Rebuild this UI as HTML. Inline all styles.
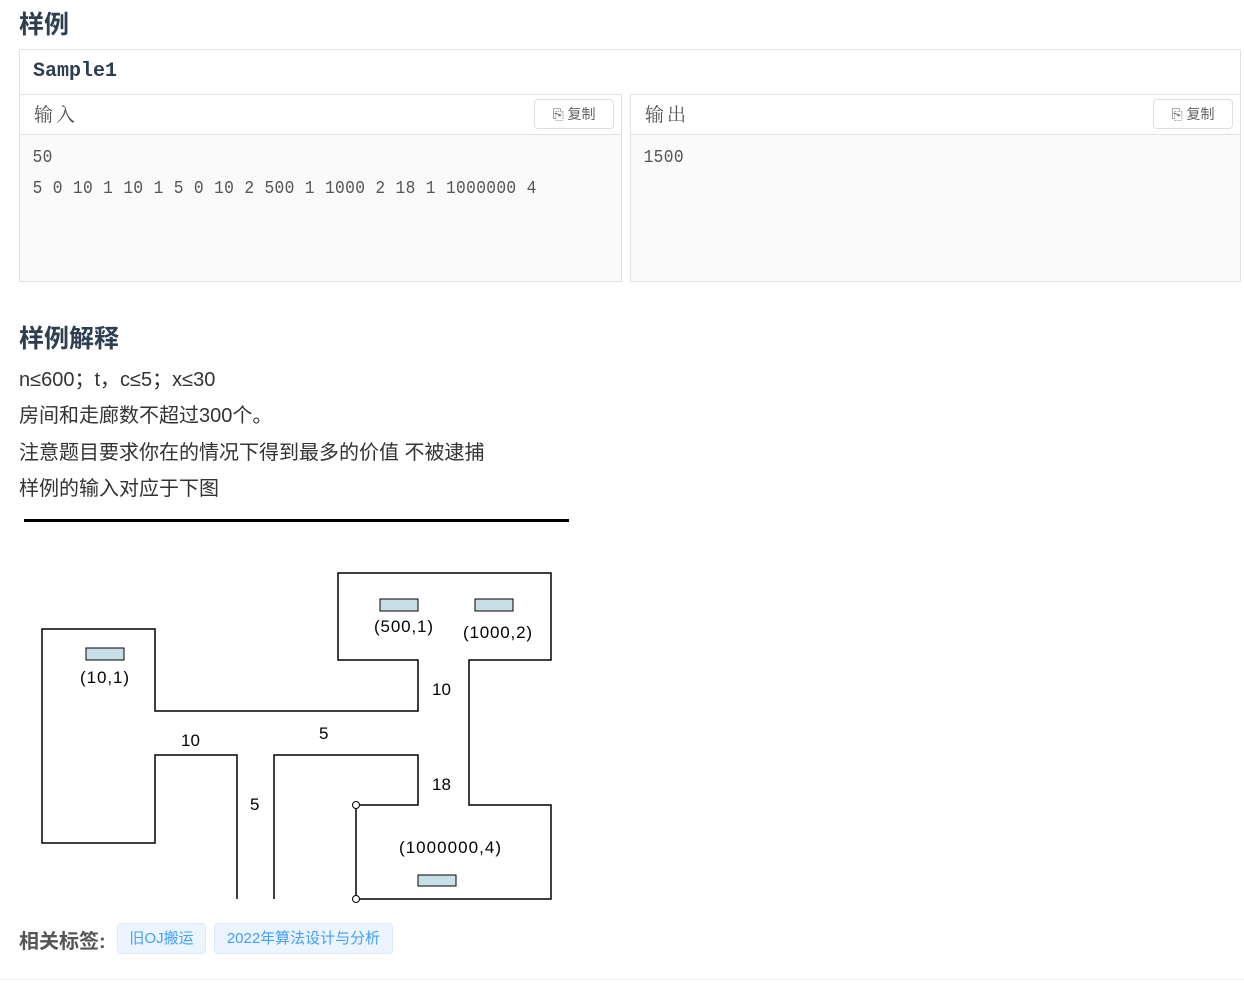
<!DOCTYPE html>
<html><head><meta charset="utf-8"><style>
*{margin:0;padding:0;box-sizing:border-box}
body{width:1244px;height:991px;background:#fff;font-family:"Liberation Sans","Noto Sans CJK SC",sans-serif;position:relative;overflow:hidden;color:#333}
.abs{position:absolute}
h2{position:absolute;font-size:25px;font-weight:bold;color:#2c3e50;font-family:"Liberation Sans","Noto Sans CJK SC",sans-serif}
.box{position:absolute;left:19px;top:49px;width:1222px;height:46px;border:1px solid #e2e2e2;border-bottom:none}
.panel{position:absolute;top:94px;height:188px;border:1px solid #e2e2e2;background:#fafafa}
.ph{height:40px;background:#fff;border-bottom:1px solid #e2e2e2;position:relative}
.ph span{position:absolute;left:14px;top:5px;font-size:19px;color:#555;font-family:"Liberation Serif","Noto Serif CJK SC",serif;letter-spacing:3px}
.btn{position:absolute;right:7px;top:4px;width:80px;height:30px;border:1px solid #dcdfe6;border-radius:4px;font-size:14px;color:#606266;text-align:center;line-height:28px}
.code{font-family:"Liberation Mono",monospace;font-size:18px;color:#555;padding:8px 14px;line-height:31px;white-space:pre;letter-spacing:0.4px;transform:scaleX(0.9);transform-origin:left}
.t{position:absolute;left:19px;font-size:20px;color:#333}
.tag{position:absolute;top:923px;height:31px;background:#ecf5ff;border:1px solid #d9ecff;border-radius:4px;color:#409eff;font-size:15px;line-height:29px;text-align:center}
</style></head><body>
<h2 style="left:19px;top:5px">样例</h2>
<div class="box"><div style="position:absolute;left:13px;top:10px;font-family:'Liberation Mono',monospace;font-weight:bold;font-size:20px;color:#2c3e50">Sample1</div></div>
<div class="panel" style="left:19px;width:603px">
 <div class="ph"><span>输入</span><div class="btn">⎘ 复制</div></div>
 <div class="code">50
5 0 10 1 10 1 5 0 10 2 500 1 1000 2 18 1 1000000 4</div>
</div>
<div class="panel" style="left:630px;width:611px">
 <div class="ph"><span>输出</span><div class="btn">⎘ 复制</div></div>
 <div class="code">1500</div>
</div>
<h2 style="left:19px;top:319px">样例解释</h2>
<div class="t" style="top:363px">n≤600；t，c≤5；x≤30</div>
<div class="t" style="top:399px">房间和走廊数不超过300个。</div>
<div class="t" style="top:436px">注意题目要求你在的情况下得到最多的价值 不被逮捕</div>
<div class="t" style="top:472px">样例的输入对应于下图</div>
<svg class="abs" style="left:0;top:0" width="1244" height="991">
<line x1="24" y1="520.5" x2="569" y2="520.5" stroke="#000" stroke-width="3"/>
<g fill="none" stroke="#000" stroke-width="1.5">
<polyline points="237,899 237,755 155,755 155,843 42,843 42,629 155,629 155,711 418,711 418,660 338,660 338,573 551,573 551,660 469,660 469,805 551,805 551,899 356,899 356,805 418,805 418,755 274,755 274,899"/>
</g>
<circle cx="356" cy="805" r="3.5" fill="#fff" stroke="#000"/>
<circle cx="356" cy="899" r="3.5" fill="#fff" stroke="#000"/>
<g fill="#c7e0e5" stroke="#000" stroke-width="1">
<rect x="86" y="648" width="38" height="12"/><rect x="380" y="599" width="38" height="12"/><rect x="475" y="599" width="38" height="12"/><rect x="418" y="875" width="38" height="11"/>
</g>
<g font-family="Liberation Sans,sans-serif" font-size="17" fill="#000">
<text x="80" y="683" textLength="49">(10,1)</text><text x="374" y="632" textLength="59">(500,1)</text><text x="463" y="638" textLength="69">(1000,2)</text>
<text x="432" y="695">10</text><text x="181" y="746">10</text><text x="319" y="739">5</text><text x="250" y="810">5</text><text x="432" y="790">18</text><text x="399" y="853" textLength="102">(1000000,4)</text>
</g>
<line x1="0" y1="979.5" x2="1244" y2="979.5" stroke="#eee"/>
</svg>
<div class="abs" style="left:19px;top:925px;font-size:20px;font-weight:bold;color:#555">相关标签:</div>
<div class="tag" style="left:117px;width:89px">旧OJ搬运</div>
<div class="tag" style="left:214px;width:179px">2022年算法设计与分析</div>
</body></html>
